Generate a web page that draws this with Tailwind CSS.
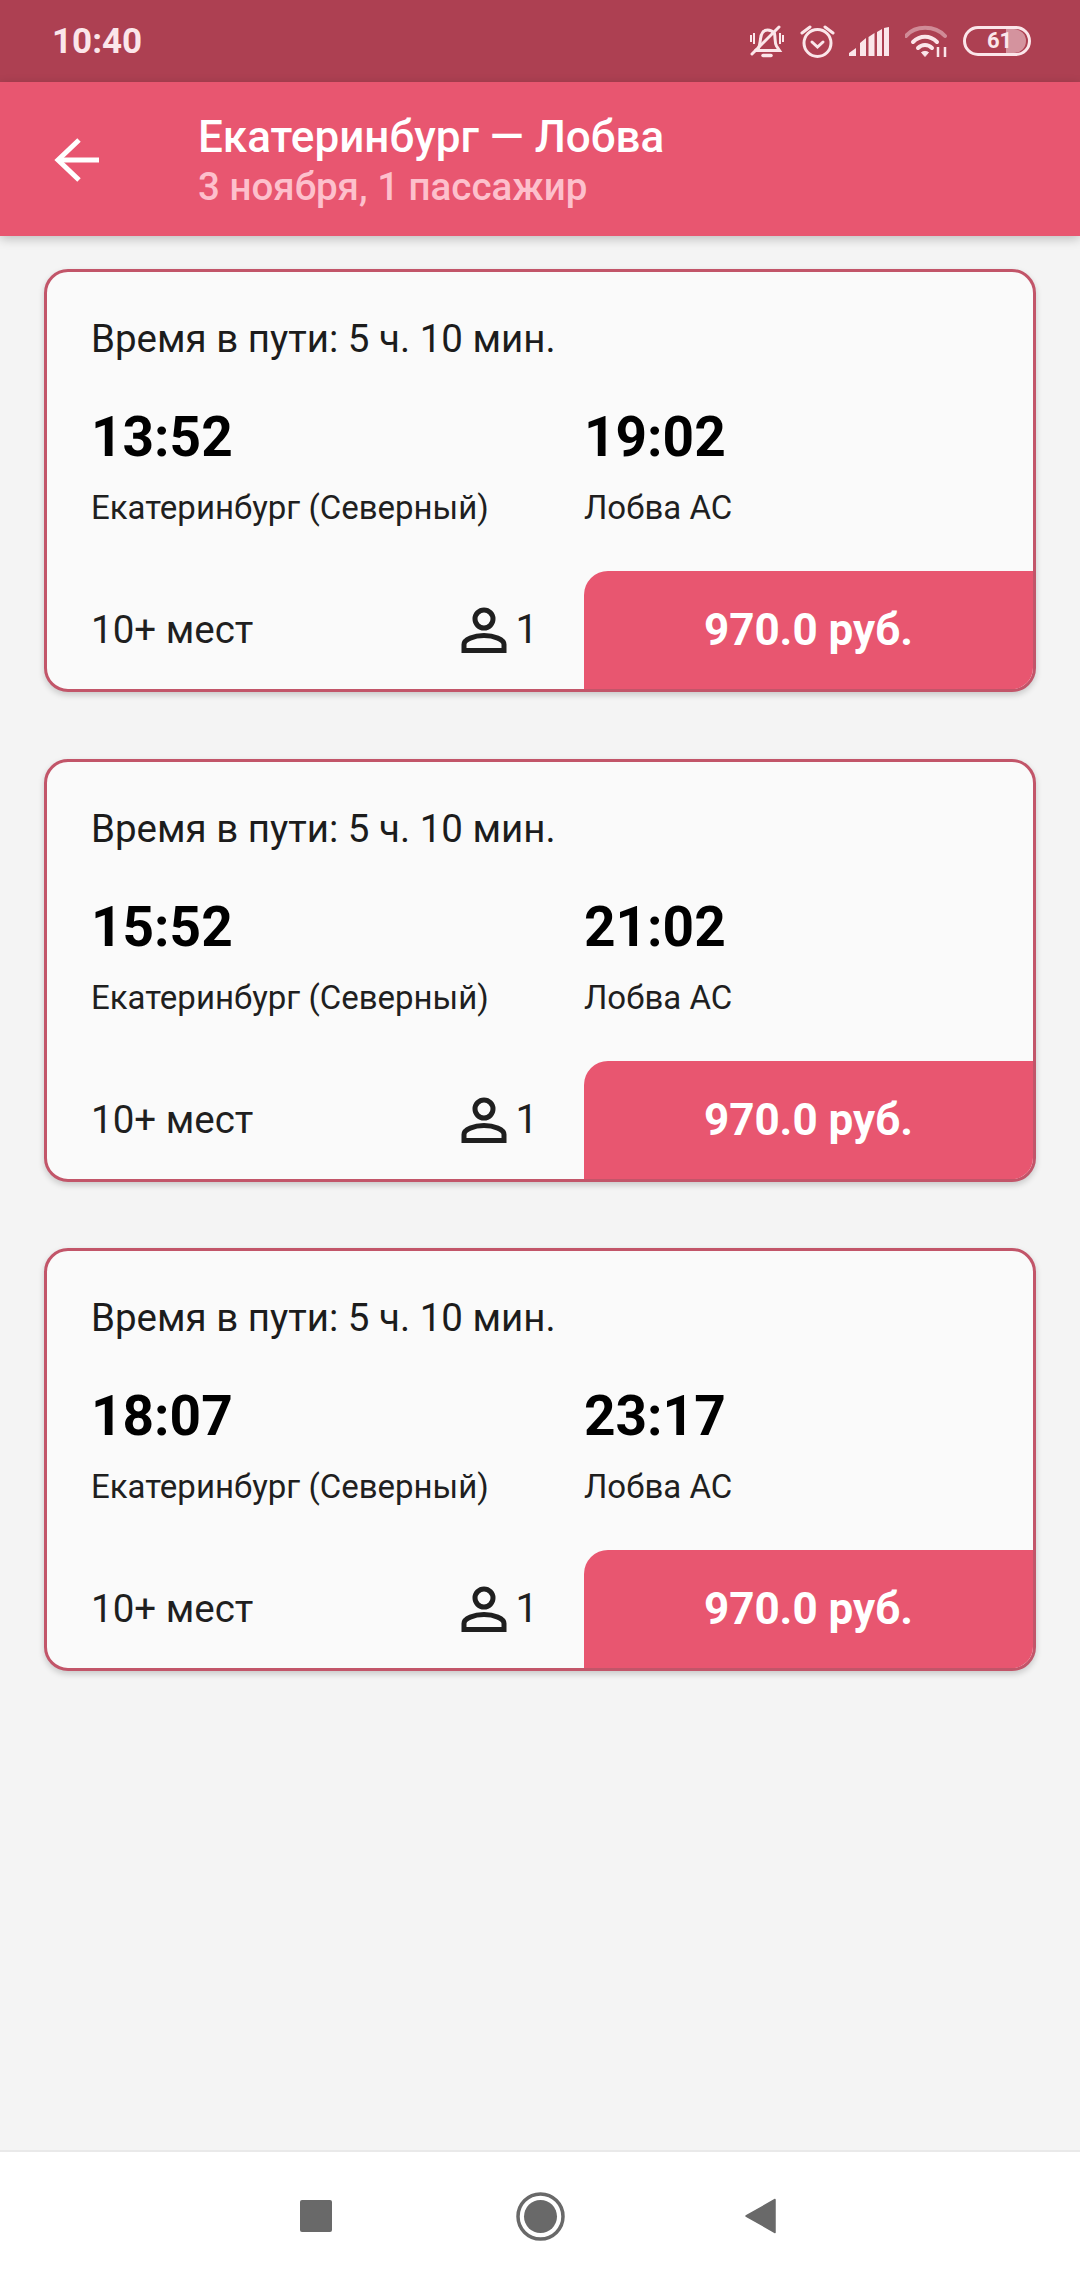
<!DOCTYPE html>
<html lang="ru">
<head>
    <meta charset="UTF-8">
    <meta name="viewport" content="width=device-width, initial-scale=1.0">
    <title>Екатеринбург — Лобва</title>
    <script src="https://cdn.jsdelivr.net/npm/@tailwindcss/browser@4"></script>
</head>
<body class="bg-[#f4f4f4] font-['Roboto',sans-serif]">
<div class="w-[1080px] h-[2280px] flex flex-col overflow-hidden">

    <!-- Status bar -->
    <div class="h-[82px] shrink-0 bg-[#ad4052] flex items-center justify-between pl-[52px] pr-[49px] text-[#fbe6ea]">
        <span class="text-[35px] font-bold leading-none">10:40</span>
        <div class="flex items-center">
            <svg class="w-[34px] h-[33px] mr-[16px]" viewBox="0 0 34 33" fill="none" stroke="currentColor" stroke-width="3">
                <path d="M8 24c2-3 2-7 2.500-10C11 8 14 5 17.500 5c3 0 5 1 7 3.500 1 5 0 9 2 12.500l3 4.500H5z" />
                <path d="M13 30.500h8" stroke-width="3.500" stroke-linecap="round" />
                <path d="M2 29 29 2" stroke-linecap="round" />
                <path d="M1 10v7M4 8v11M30 8v11M33 10v7" stroke-width="2" />
            </svg>
            <svg class="w-[35px] h-[34px] mr-[14px]" viewBox="0 0 35 34" fill="none" stroke="currentColor" stroke-width="3">
                <circle cx="17.500" cy="19" r="13.500" />
                <path d="M12 18l5.500 5 5.500-5" stroke-linecap="round" />
                <path d="M2 9l8-6M33 9l-8-6" stroke-linecap="round" />
            </svg>
            <svg class="w-[40px] h-[29px] mr-[16px]" viewBox="0 0 40 29" fill="currentColor">
                <path d="M0 29v-3l7-5v8zM11 29V16l6-5v18zM19.500 29V10l6-4v23zM28 29V5l5-3v27zM35 29V1l5-1v29z" />
            </svg>
            <svg class="w-[43px] h-[33px] mr-[15px]" viewBox="0 0 43 33" fill="none" stroke="currentColor" stroke-width="4">
                <path d="M1 11C10 0 30 0 40 11" opacity=".45" stroke-width="4" stroke-linecap="round" />
                <path d="M8 17c7-7 17-7 24 0" stroke-linecap="round" />
                <path d="M13 23c4-4 10-4 14 0" stroke-linecap="round" />
                <path d="M16.500 27.500l3.500 4 3.500-4c-2-1.500-5-1.500-7 0z" fill="currentColor" stroke-width="1" />
                <path d="M33 22v10M40 22v10" stroke-width="2.500" />
            </svg>
            <div class="relative w-[68px] h-[30px] rounded-full border-[3px] border-[#fbe6ea] overflow-hidden">
                <div class="absolute left-[40px] top-0 bottom-0 w-[20px] bg-[#fbe6ea]/50 rounded-r-full"></div>
                <span class="absolute left-[21px] top-[1px] text-[22px] font-bold leading-[22px]">61</span>
            </div>
        </div>
    </div>

    <!-- App bar -->
    <header class="relative z-10 h-[154px] shrink-0 bg-[#e85670] flex items-center shadow-[0_3px_10px_rgba(0,0,0,0.22)]">
        <div class="w-[198px] shrink-0 pl-[54px] pt-[2px]">
            <svg class="w-[46px] h-[46px]" viewBox="0 0 46 46" fill="none" stroke="#ffffff" stroke-width="5">
                <path d="M45 23H4" />
                <path d="M25 3 4 23l21 20" />
            </svg>
        </div>
        <div class="flex flex-col text-left">
            <span class="text-[44px] font-medium leading-[52px] text-white">Екатеринбург — Лобва</span>
            <span class="mt-[3px] text-[38.500px] font-medium leading-[42px] text-[#fdc0cc]">3 ноября, 1 пассажир</span>
        </div>
    </header>

    <!-- Trips -->
    <main class="flex-1 px-[44px] pt-[33px] flex flex-col gap-[66.500px]">

        <div class="h-[423px] rounded-[24px] border-[3px] border-[#c25569] bg-[#fafafa] shadow-[0_3px_6px_rgba(0,0,0,0.18)] overflow-hidden flex flex-col">
            <p class="pl-[44px] pt-[45px] text-[38.500px] leading-[44px] text-[#1c1c1c]">Время в пути: 5 ч. 10 мин.</p>
            <div class="flex mt-[43px]">
                <div class="w-[537px] pl-[44px]">
                    <div class="text-[55px] font-bold leading-[66px] text-black">13:52</div>
                    <div class="mt-[18px] text-[33px] leading-[40px] text-[#1f1f1f]">Екатеринбург (Северный)</div>
                </div>
                <div>
                    <div class="text-[55px] font-bold leading-[66px] text-black">19:02</div>
                    <div class="mt-[18px] text-[33px] leading-[40px] text-[#1f1f1f]">Лобва АС</div>
                </div>
            </div>
            <div class="mt-auto flex items-stretch h-[118px]">
                <div class="w-[537px] shrink-0 pl-[44px] pr-[46px] flex items-center justify-between">
                    <span class="text-[38.500px] text-[#1f1f1f]">10+ мест</span>
                    <div class="flex items-center gap-[9px]">
                        <svg class="w-[46px] h-[46px]" viewBox="0 0 46 46" fill="none" stroke="#1f1f1f" stroke-width="5">
                            <circle cx="23" cy="12" r="9" />
                            <path d="M3 43.500v-6c0-5 10-9 20-9s20 4 20 9v6z" />
                        </svg>
                        <span class="text-[40px] text-[#1f1f1f]">1</span>
                    </div>
                </div>
                <div class="flex-1 rounded-tl-[24px] bg-[#e85670] flex items-center justify-center text-[44px] font-bold text-white">970.0 руб.</div>
            </div>
        </div>

        <div class="h-[423px] rounded-[24px] border-[3px] border-[#c25569] bg-[#fafafa] shadow-[0_3px_6px_rgba(0,0,0,0.18)] overflow-hidden flex flex-col">
            <p class="pl-[44px] pt-[45px] text-[38.500px] leading-[44px] text-[#1c1c1c]">Время в пути: 5 ч. 10 мин.</p>
            <div class="flex mt-[43px]">
                <div class="w-[537px] pl-[44px]">
                    <div class="text-[55px] font-bold leading-[66px] text-black">15:52</div>
                    <div class="mt-[18px] text-[33px] leading-[40px] text-[#1f1f1f]">Екатеринбург (Северный)</div>
                </div>
                <div>
                    <div class="text-[55px] font-bold leading-[66px] text-black">21:02</div>
                    <div class="mt-[18px] text-[33px] leading-[40px] text-[#1f1f1f]">Лобва АС</div>
                </div>
            </div>
            <div class="mt-auto flex items-stretch h-[118px]">
                <div class="w-[537px] shrink-0 pl-[44px] pr-[46px] flex items-center justify-between">
                    <span class="text-[38.500px] text-[#1f1f1f]">10+ мест</span>
                    <div class="flex items-center gap-[9px]">
                        <svg class="w-[46px] h-[46px]" viewBox="0 0 46 46" fill="none" stroke="#1f1f1f" stroke-width="5">
                            <circle cx="23" cy="12" r="9" />
                            <path d="M3 43.500v-6c0-5 10-9 20-9s20 4 20 9v6z" />
                        </svg>
                        <span class="text-[40px] text-[#1f1f1f]">1</span>
                    </div>
                </div>
                <div class="flex-1 rounded-tl-[24px] bg-[#e85670] flex items-center justify-center text-[44px] font-bold text-white">970.0 руб.</div>
            </div>
        </div>

        <div class="h-[423px] rounded-[24px] border-[3px] border-[#c25569] bg-[#fafafa] shadow-[0_3px_6px_rgba(0,0,0,0.18)] overflow-hidden flex flex-col">
            <p class="pl-[44px] pt-[45px] text-[38.500px] leading-[44px] text-[#1c1c1c]">Время в пути: 5 ч. 10 мин.</p>
            <div class="flex mt-[43px]">
                <div class="w-[537px] pl-[44px]">
                    <div class="text-[55px] font-bold leading-[66px] text-black">18:07</div>
                    <div class="mt-[18px] text-[33px] leading-[40px] text-[#1f1f1f]">Екатеринбург (Северный)</div>
                </div>
                <div>
                    <div class="text-[55px] font-bold leading-[66px] text-black">23:17</div>
                    <div class="mt-[18px] text-[33px] leading-[40px] text-[#1f1f1f]">Лобва АС</div>
                </div>
            </div>
            <div class="mt-auto flex items-stretch h-[118px]">
                <div class="w-[537px] shrink-0 pl-[44px] pr-[46px] flex items-center justify-between">
                    <span class="text-[38.500px] text-[#1f1f1f]">10+ мест</span>
                    <div class="flex items-center gap-[9px]">
                        <svg class="w-[46px] h-[46px]" viewBox="0 0 46 46" fill="none" stroke="#1f1f1f" stroke-width="5">
                            <circle cx="23" cy="12" r="9" />
                            <path d="M3 43.500v-6c0-5 10-9 20-9s20 4 20 9v6z" />
                        </svg>
                        <span class="text-[40px] text-[#1f1f1f]">1</span>
                    </div>
                </div>
                <div class="flex-1 rounded-tl-[24px] bg-[#e85670] flex items-center justify-center text-[44px] font-bold text-white">970.0 руб.</div>
            </div>
        </div>
    </main>

    <!-- Navigation bar -->
    <nav class="h-[130px] shrink-0 bg-white border-t-2 border-[#e9e9e9] flex items-center justify-center pr-[4px]">
        <svg class="w-[32px] h-[32px] mr-[184px]" viewBox="0 0 32 32" fill="#696969"><rect width="32" height="32" rx="2" /></svg>
        <svg class="w-[49px] h-[49px] mr-[180px]" viewBox="0 0 49 49" fill="#696969">
            <circle cx="24.500" cy="24.500" r="22.500" fill="none" stroke="#696969" stroke-width="3.500" />
            <circle cx="24.500" cy="24.500" r="16.500" />
        </svg>
        <svg class="w-[31px] h-[36px]" viewBox="0 0 31 36" fill="#696969"><path d="M30 1.500v33L1 18z" stroke="#696969" stroke-width="1.500" stroke-linejoin="round" /></svg>
    </nav>
</div>
</body>
</html>
